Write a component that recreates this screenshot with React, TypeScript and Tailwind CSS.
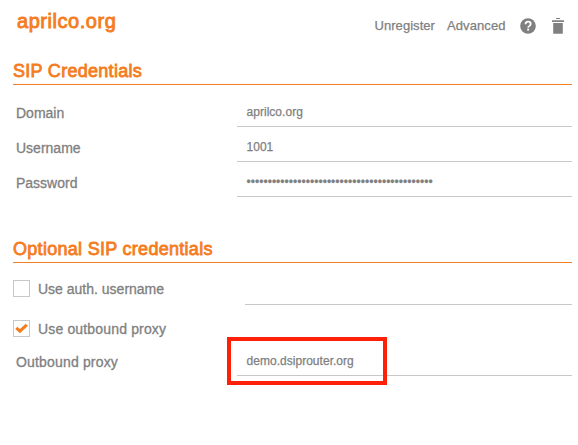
import type { ReactNode } from "react";

function SectionTitle({ children }: { children: ReactNode }) {
  return (
    <h2 className="ml-[13px] mr-[6px] h-[25px] border-b border-[#f58025] text-[18px] leading-[22px] tracking-[0.29px] text-[#f57c20] [-webkit-text-stroke:0.8px_#f57c20]">
      {children}
    </h2>
  );
}

interface FieldProps {
  label: string;
  value: string;
  wide?: boolean;
}

function Field({ label, value, wide }: FieldProps) {
  return (
    <div className="flex h-[35px] items-end pr-[6px]">
      <label
        className={`ml-[16px] h-[25px] w-[221px] text-[14px] leading-[22px] [-webkit-text-stroke:0.3px_#808080] ${wide ? "tracking-[0.17px]" : ""}`}
      >
        {label}
      </label>
      <div className="h-[27px] flex-1 border-b border-[#c8c8c8] pl-[9.5px] text-[12px] leading-[24px] tracking-[0.03px] [-webkit-text-stroke:0.25px_#808080]">
        {value}
      </div>
    </div>
  );
}

interface CheckOptionProps {
  label: string;
  checked?: boolean;
}

function CheckOption({ label, checked }: CheckOptionProps) {
  return (
    <div className="flex h-[17px] items-center">
      <span className="flex size-[17px] items-center justify-center border border-[#c8c8c8]">
        {checked && (
          <svg width="13" height="11" viewBox="0 0 13 11" fill="none">
            <path d="M1.3 4.8 4.9 8.2 11.8 1.8" stroke="#f57c20" strokeWidth="3.1" />
          </svg>
        )}
      </span>
      <span
        className={`ml-[8px] mt-[2px] text-[14px] leading-[17px] [-webkit-text-stroke:0.3px_#808080] ${checked ? "tracking-[0.16px]" : ""}`}
      >
        {label}
      </span>
    </div>
  );
}

export default function App() {
  return (
    <main className="h-[445px] w-[578px] overflow-hidden bg-white font-['Liberation_Sans',Arial,sans-serif] text-[#808080]">
      <header className="flex h-[60px] justify-between pl-[17px] pr-[14px]">
        <h1 className="mt-[9px] text-[20px] leading-[24px] tracking-[0.55px] text-[#f57c20] [-webkit-text-stroke:0.85px_#f57c20]">
          aprilco.org
        </h1>
        <nav className="mt-[16px] flex h-[20px] items-center text-[13px] leading-[20px] [-webkit-text-stroke:0.25px_#808080]">
          <span className="w-[72.5px] tracking-[0.05px]">Unregister</span>
          <span className="w-[73px] tracking-[0.1px]">Advanced</span>
          <svg width="16" height="16" viewBox="0 0 16 16" fill="none">
            <circle cx="8" cy="8" r="7.8" fill="#808080" />
            <path d="M5.5 6.3c0-1.6 1-2.6 2.6-2.6s2.6 1 2.6 2.3c0 1.8-2.5 1.9-2.5 3.7" stroke="#fff" strokeWidth="1.8" />
            <path d="M7.2 10.7h1.9v1.9H7.2z" fill="#fff" />
          </svg>
          <svg className="ml-[16px]" width="12" height="16" viewBox="0 0 12 16" fill="#808080">
            <path d="M4 0h4v1H4zM0 2.3h12v1.7H0zM1.2 5h9.6v10.8H1.2z" />
          </svg>
        </nav>
      </header>
      <section>
        <SectionTitle>SIP Credentials</SectionTitle>
        <div className="pt-[7px]">
          <Field label="Domain" value="aprilco.org" />
          <Field label="Username" value="1001" />
          <Field label="Password" value={"•".repeat(44)} />
        </div>
      </section>
      <section className="pt-[41px]">
        <SectionTitle>Optional SIP credentials</SectionTitle>
        <div className="flex h-[42px] justify-between pl-[13px] pr-[6px] pt-[17px]">
          <CheckOption label="Use auth. username" />
          <div className="h-full w-[327px] border-b border-[#c8c8c8]" />
        </div>
        <div className="pl-[13px] pt-[15px]">
          <CheckOption label="Use outbound proxy" checked />
        </div>
        <div className="relative pt-[4px]">
          <Field label="Outbound proxy" value="demo.dsiprouter.org" wide />
          <div className="absolute left-[227px] top-0 h-[48px] w-[160px] border-4 border-[#ff2008]" />
        </div>
      </section>
    </main>
  );
}
